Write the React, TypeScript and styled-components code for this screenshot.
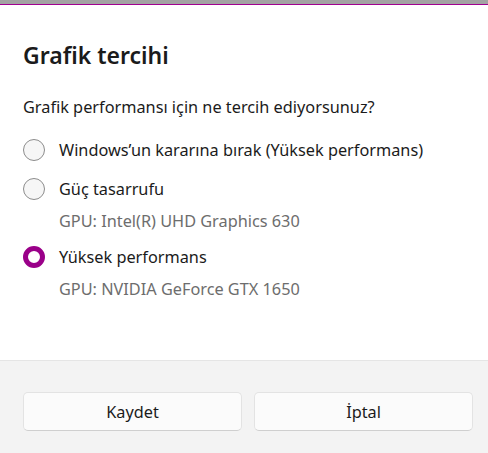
import React, { useState } from 'react';
import styled, { createGlobalStyle } from 'styled-components';

const GlobalStyle = createGlobalStyle`
  html, body {
    margin: 0;
    padding: 0;
    background: #ffffff;
  }
  body {
    font-family: 'Segoe UI', 'Noto Sans', sans-serif;
    color: #1b1b1b;
  }
`;

export const Dialog = styled.div`
  width: 488px;
  height: 453px;
  display: flex;
  flex-direction: column;
  background: #ffffff;
  overflow: hidden;
`;

export const BackdropStrip = styled.div`
  height: 4px;
  background: #a3a3a3;
  border-bottom: 1px solid #a0008f;
  flex-shrink: 0;
`;

export const Body = styled.div`
  flex: 1;
  padding: 32px 23px 0;
  display: flex;
  flex-direction: column;
`;

export const Title = styled.h1`
  margin: 0;
  font-size: 23px;
  line-height: 36px;
  font-weight: 600;
  color: #1b1b1b;
`;

export const Question = styled.p`
  margin: 23px 0 12px;
  font-size: 16.3px;
  line-height: 22px;
  color: #1b1b1b;
`;

export const Options = styled.div`
  display: flex;
  flex-direction: column;
`;

export const Option = styled.label<{ $hasGpu: boolean }>`
  display: grid;
  grid-template-columns: 22px 1fr;
  column-gap: 14px;
  align-items: center;
  cursor: pointer;
  padding: 9px 0 ${(p) => (p.$hasGpu ? '5px' : '8px')};
`;

export const Radio = styled.span<{ $checked: boolean }>`
  width: 22px;
  height: 22px;
  box-sizing: border-box;
  border-radius: 50%;
  border: ${(p) => (p.$checked ? '5px solid #9a0089' : '1px solid #8c8c8c')};
  background: ${(p) => (p.$checked ? '#ffffff' : '#f6f6f6')};
`;

export const OptionLabel = styled.span`
  font-size: 16.3px;
  line-height: 22px;
  color: #1b1b1b;
`;

export const Gpu = styled.span`
  grid-column: 2;
  font-size: 16.3px;
  line-height: 22px;
  color: #6d6d6d;
  margin-top: 10px;
`;

export const Footer = styled.div`
  height: 93px;
  flex-shrink: 0;
  box-sizing: border-box;
  background: #f3f3f3;
  border-top: 1px solid #e5e5e5;
  padding: 31px 15px 0 23px;
  display: grid;
  grid-template-columns: 1fr 1fr;
  column-gap: 12px;
  align-items: start;
`;

export const Button = styled.button`
  height: 39px;
  border-radius: 5px;
  border: 1px solid #e3e3e3;
  border-bottom-color: #cfcfcf;
  background: #fbfbfb;
  font-family: 'Segoe UI', 'Noto Sans', sans-serif;
  font-size: 16.3px;
  color: #1b1b1b;
  cursor: pointer;
`;

const options = [
  { id: 'auto', label: 'Windows’un kararına bırak (Yüksek performans)' },
  { id: 'save', label: 'Güç tasarrufu', gpu: 'GPU: Intel(R) UHD Graphics 630' },
  { id: 'high', label: 'Yüksek performans', gpu: 'GPU: NVIDIA GeForce GTX 1650' },
];

export default function App() {
  const [selected, setSelected] = useState('high');

  return (
    <>
      <GlobalStyle />
      <Dialog>
        <BackdropStrip />
        <Body>
          <Title>Grafik tercihi</Title>
          <Question>Grafik performansı için ne tercih ediyorsunuz?</Question>
          <Options>
            {options.map((o) => (
              <Option key={o.id} $hasGpu={!!o.gpu} onClick={() => setSelected(o.id)}>
                <Radio $checked={selected === o.id} />
                <OptionLabel>{o.label}</OptionLabel>
                {o.gpu && <Gpu>{o.gpu}</Gpu>}
              </Option>
            ))}
          </Options>
        </Body>
        <Footer>
          <Button>Kaydet</Button>
          <Button>İptal</Button>
        </Footer>
      </Dialog>
    </>
  );
}
